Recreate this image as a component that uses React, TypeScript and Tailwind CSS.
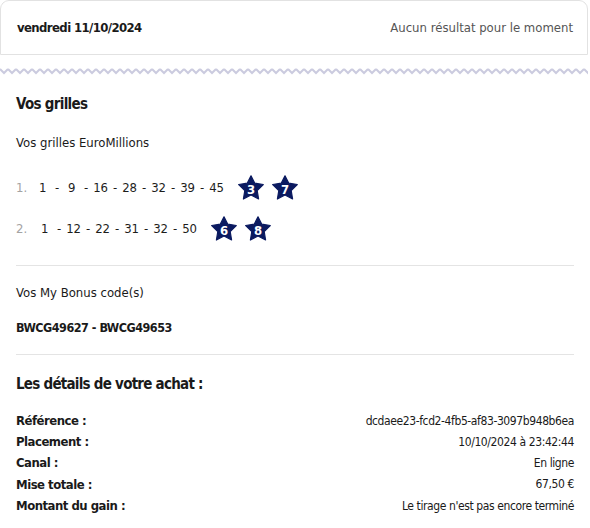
import React from 'react';

const font = { fontFamily: '"DejaVu Sans Condensed", "DejaVu Sans", sans-serif' };

const Star = ({ n }: { n: number }) => (
  <div className="relative w-[26px] h-[26px] flex items-center justify-center">
    <svg width="26" height="26" viewBox="0 0 26 26" className="absolute inset-0">
      <polygon
        points="13,0.8 16.8,8.2 25.3,9.5 19.2,15.5 20.6,24 13,20 5.4,24 6.8,15.5 0.7,9.5 9.2,8.2"
        fill="#0b1a60"
        stroke="#0b1a60"
        strokeWidth="1.2"
        strokeLinejoin="round"
      />
    </svg>
    <span className="relative text-white font-bold text-[13px] leading-none mt-[2px] tracking-[-0.3px]">{n}</span>
  </div>
);

const Grid = ({ idx, nums, stars }: { idx: number; nums: number[]; stars: number[] }) => (
  <div className="flex items-center h-[28px]">
    <span className={`text-[13px] text-[#a3a3a3] ${idx === 1 ? 'w-[18px]' : 'w-[20px]'}`}>{idx}.</span>
    <div className="flex items-center text-[13px] tracking-[-0.3px] text-[#1d1d1b]">
      {nums.map((n, i) => (
        <React.Fragment key={i}>
          {i > 0 && <span className="w-[12px] text-center">-</span>}
          <span className="w-[17px] text-center">{n}</span>
        </React.Fragment>
      ))}
    </div>
    <div className="flex items-center gap-[8px] ml-[13px]">
      {stars.map((s) => (
        <Star key={s} n={s} />
      ))}
    </div>
  </div>
);

const details = [
  ['Référence :', 'dcdaee23-fcd2-4fb5-af83-3097b948b6ea'],
  ['Placement :', '10/10/2024 à 23:42:44'],
  ['Canal :', 'En ligne'],
  ['Mise totale :', '67,50 €'],
  ['Montant du gain :', "Le tirage n'est pas encore terminé"],
];

const App = () => {
  return (
    <div className="w-[590px] h-[528px] bg-white overflow-hidden text-[#1a1a1a]" style={font}>
      {/* Header */}
      <div className="w-[588px] h-[55px] border border-[#e2e2e2] rounded-t-[9px] flex items-center justify-between pl-4 pr-[14px]">
        <span className="font-bold text-[13px] tracking-[-0.6px]">vendredi 11/10/2024</span>
        <span className="text-[13px] text-[#555555]">Aucun résultat pour le moment</span>
      </div>

      {/* Zigzag */}
      <svg width="588" height="10" className="block mt-[11px]">
        <defs>
          <pattern id="zz" width="8" height="10" patternUnits="userSpaceOnUse">
            <polyline points="0,3 4,7 8,3" fill="none" stroke="#cbcbdf" strokeWidth="2" />
          </pattern>
        </defs>
        <rect width="588" height="10" fill="url(#zz)" />
      </svg>

      <div className="pl-4 w-[574px]">
        <h2 className="mt-[16px] font-bold text-[15px] tracking-[-0.7px] leading-[24px]">Vos grilles</h2>
        <p className="mt-[17px] text-[13px] leading-[20px]">Vos grilles EuroMillions</p>

        <div className="mt-[21px]">
          <Grid idx={1} nums={[1, 9, 16, 28, 32, 39, 45]} stars={[3, 7]} />
        </div>
        <div className="mt-[13px]">
          <Grid idx={2} nums={[1, 12, 22, 31, 32, 50]} stars={[6, 8]} />
        </div>

        <div className="mt-[22px] border-t border-[#e4e4e4]" />

        <p className="mt-[17px] text-[13px] leading-[20px]">Vos My Bonus code(s)</p>
        <p className="mt-[15px] text-[12.5px] tracking-[-0.5px] leading-[20px] font-bold">BWCG49627 - BWCG49653</p>

        <div className="mt-[16px] border-t border-[#e4e4e4]" />

        <h2 className="mt-[17px] font-bold text-[15px] tracking-[-0.75px] leading-[24px]">
          Les détails de votre achat :
        </h2>

        <div className="mt-[14px]">
          {details.map(([k, v]) => (
            <div key={k} className="flex justify-between items-center h-[21.25px]">
              <span className="font-bold text-[13px] tracking-[-0.5px]">{k}</span>
              <span className="text-[12px] tracking-[-0.4px]">{v}</span>
            </div>
          ))}
        </div>
      </div>
    </div>
  );
};

export default App;
